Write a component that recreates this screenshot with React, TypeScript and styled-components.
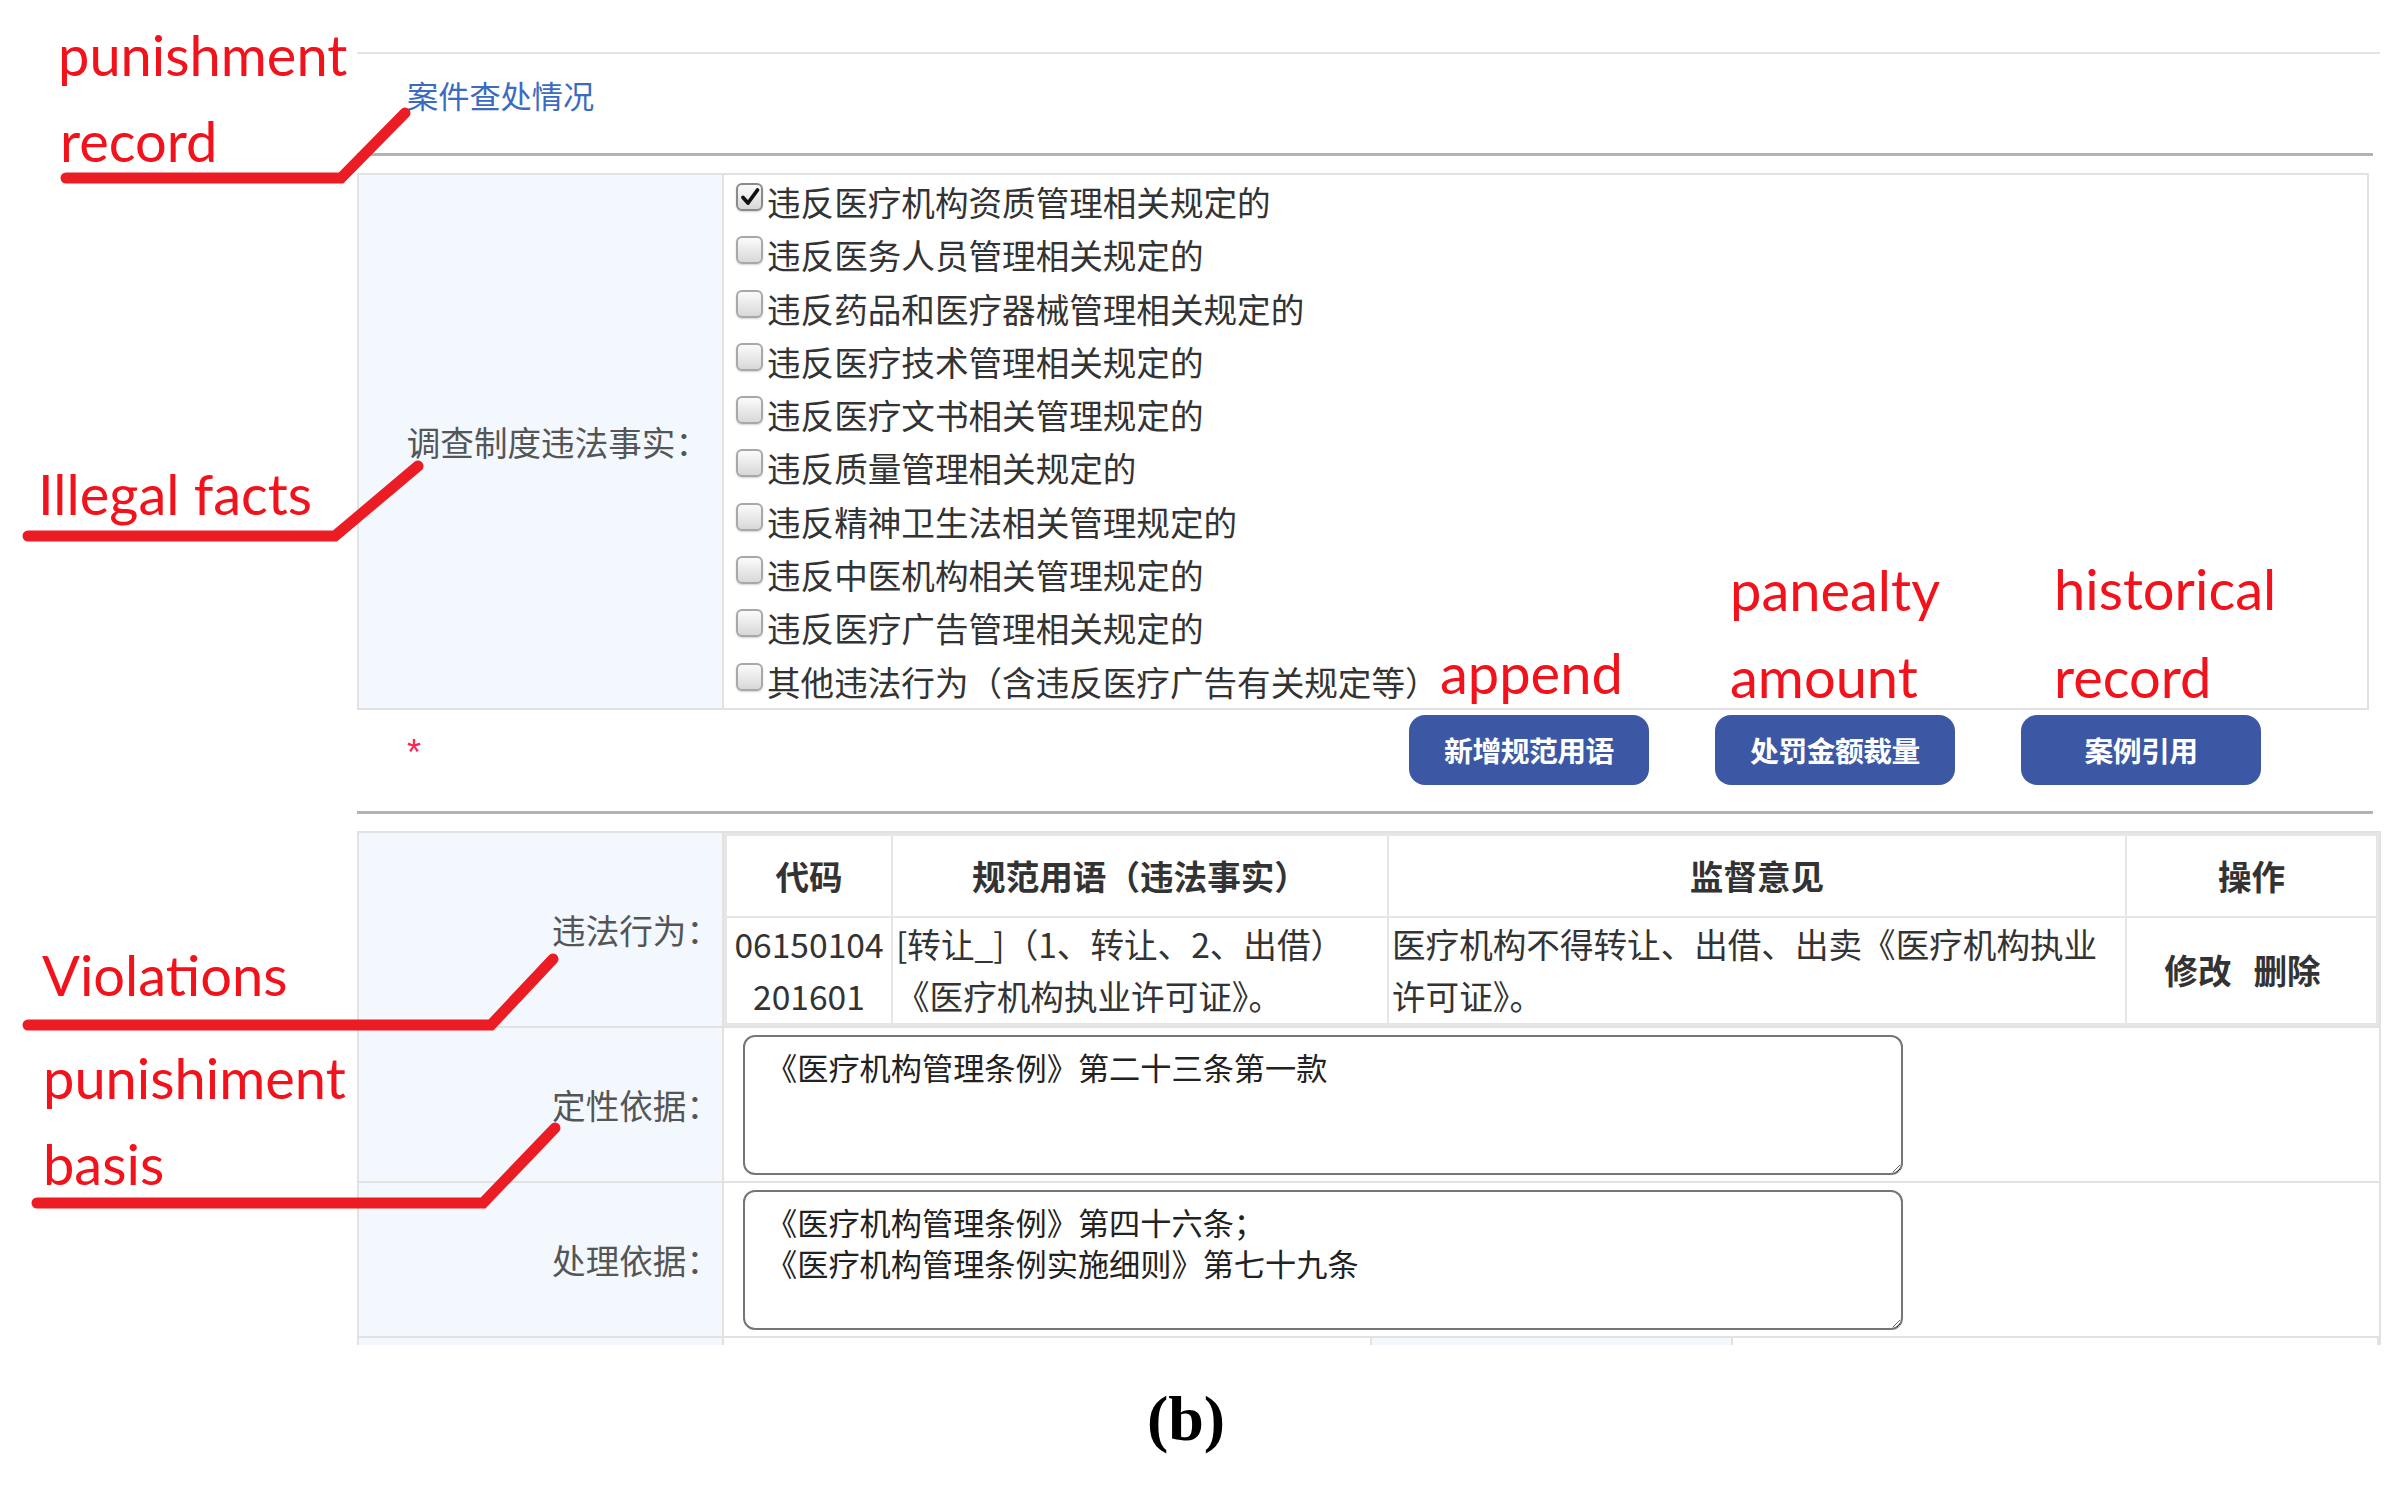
import styled, { createGlobalStyle } from "styled-components"

const GlobalStyle = createGlobalStyle`
  html, body {
    margin: 0;
    padding: 0;
    background: #fff;
  }
  body {
    width: 2408px;
    height: 1486px;
    overflow: hidden;
  }
  * {
    box-sizing: border-box;
  }
`

const cjk = `"Noto Sans CJK SC", "Microsoft YaHei", sans-serif`

const Page = styled.div`
  position: relative;
  width: 2408px;
  height: 1486px;
  background: #fff;
  overflow: hidden;
  font-family: ${cjk};
  color: #333;
`

const Sheet = styled.div`
  margin-left: 357px;
  padding-top: 52px;
  width: 2023px;
`

const Rule = styled.div<{ $tone: "light" | "dark"; $width: number }>`
  width: ${p => p.$width}px;
  border-top: ${p => (p.$tone === "light" ? "2px solid #e3e3e3" : "3px solid #b3b3b3")};
`

const TitleRow = styled.div`
  height: 99px;
  padding: 21px 0 0 50px;
  font-size: 31.2px;
  line-height: 40px;
  color: #3b6bc1;
`

const Panel = styled.div<{ $width: number; $open?: boolean }>`
  margin-top: 17px;
  width: ${p => p.$width}px;
  display: grid;
  grid-template-columns: 365px 1fr;
  border: 2px solid #e2e2e2;
  border-bottom: ${p => (p.$open ? "none" : "2px solid #e2e2e2")};
`

const LabelCell = styled.div<{ $pad: number; $last?: boolean }>`
  display: flex;
  align-items: center;
  justify-content: flex-end;
  padding-right: ${p => p.$pad}px;
  background: #f2f8fd;
  border-right: 2px solid #e2e2e2;
  border-bottom: ${p => (p.$last ? "none" : "2px solid #e2e2e2")};
  font-size: 33.6px;
  color: #555;
  white-space: nowrap;
`

const CheckList = styled.div`
  display: flex;
  flex-direction: column;
  padding-left: 12px;
`

const CheckRow = styled.label`
  display: flex;
  align-items: flex-start;
  gap: 4px;
  height: 53.3px;
  font-size: 33.6px;
  line-height: 53.3px;
  color: #333;
  white-space: nowrap;
`

const CheckBox = styled.span<{ $checked?: boolean }>`
  flex: none;
  width: 27px;
  height: 28px;
  margin-top: 8px;
  display: flex;
  align-items: center;
  justify-content: center;
  border: 2px solid ${p => (p.$checked ? "#8a8a8a" : "#a8a8a8")};
  border-radius: 6px;
  background: linear-gradient(#fbfbfb, #d8d8d8);
  box-shadow: 0 1px 2px rgba(0, 0, 0, 0.18);
`

const ActionRow = styled.div`
  height: 101px;
  display: flex;
  align-items: flex-start;
`

const Star = styled.span`
  margin: 25px 0 0 50px;
  font-family: "Liberation Sans", Arial, sans-serif;
  font-size: 36px;
  line-height: 1;
  color: #ff2255;
`

const ButtonGroup = styled.div`
  margin: 5px 119px 0 auto;
  display: flex;
  gap: 66px;
`

const ActionButton = styled.button`
  width: 240px;
  height: 70px;
  border: none;
  border-radius: 16px;
  background: #3c58a4;
  color: #fff;
  font-family: ${cjk};
  font-size: 28.8px;
  font-weight: 700;
  letter-spacing: -0.5px;
  cursor: pointer;
`

const TableCell = styled.div`
  border-bottom: 2px solid #e2e2e2;
`

const Table = styled.table`
  width: 100%;
  table-layout: fixed;
  border-collapse: separate;
  border-spacing: 0;
  border: 3px solid #e6e6e6;
`

const Th = styled.th<{ $last?: boolean }>`
  height: 82px;
  padding: 0;
  line-height: 80px;
  border-right: ${p => (p.$last ? "none" : "2px solid #e6e6e6")};
  border-bottom: 2px solid #e6e6e6;
  font-size: 33.6px;
  font-weight: 700;
  color: #333;
  text-align: center;
`

const Td = styled.td<{ $align: "left" | "center"; $last?: boolean }>`
  padding: ${p => (p.$align === "left" ? "0 0 0 3px" : p.$last ? "0 18px 0 0" : "0")};
  line-height: 52.5px;
  border-right: ${p => (p.$last ? "none" : "2px solid #e6e6e6")};
  font-size: 33.6px;
  color: #333;
  text-align: ${p => p.$align};
  vertical-align: middle;
  white-space: nowrap;
`

const OpLink = styled.span`
  margin: 0 11px;
  font-weight: 700;
  color: #333;
  cursor: pointer;
`

const BasisCell = styled.div`
  padding: 7px 0 6px 19px;
  border-bottom: 2px solid #e2e2e2;
`

const BasisText = styled.textarea`
  display: block;
  width: 1160px;
  height: 140px;
  padding: 9px 21px;
  border: 2.5px solid #767676;
  border-radius: 12px;
  background: #fff;
  font-family: ${cjk};
  font-size: 31.2px;
  line-height: 41px;
  color: #222;
  outline: none;
`

const StubRow = styled.div`
  grid-column: 1 / -1;
  height: 7px;
  display: grid;
  grid-template-columns: 365px 648px 361px 1fr;
`

const Stub = styled.div<{ $shade?: boolean }>`
  background: ${p => (p.$shade ? "#f2f8fd" : "#fff")};
  border-right: 2px solid #e2e2e2;
`

const Caption = styled.div`
  margin-top: 42px;
  padding-right: 36px;
  text-align: center;
  font-family: "Liberation Serif", "Times New Roman", serif;
  font-size: 64px;
  font-weight: 700;
  line-height: 1;
  color: #000;
`

const Note = styled.span<{ $x: number; $y: number }>`
  position: absolute;
  left: ${p => p.$x}px;
  top: ${p => p.$y}px;
  font-family: Lato, "Open Sans", sans-serif;
  font-size: 56px;
  line-height: 1;
  color: #f2121c;
  white-space: nowrap;
`

const Leaders = styled.svg`
  position: absolute;
  left: 0;
  top: 0;
  pointer-events: none;
`

const facts = [
  "违反医疗机构资质管理相关规定的",
  "违反医务人员管理相关规定的",
  "违反药品和医疗器械管理相关规定的",
  "违反医疗技术管理相关规定的",
  "违反医疗文书相关管理规定的",
  "违反质量管理相关规定的",
  "违反精神卫生法相关管理规定的",
  "违反中医机构相关管理规定的",
  "违反医疗广告管理相关规定的",
  "其他违法行为（含违反医疗广告有关规定等）",
]

// red callouts laid over the screenshot, with their leader lines
const notes = [
  { text: "punishment", x: 58, y: 27 },
  { text: "record", x: 60, y: 113 },
  { text: "Illegal facts", x: 38, y: 466 },
  { text: "Violations", x: 42, y: 947 },
  { text: "punishiment", x: 43, y: 1050 },
  { text: "basis", x: 43, y: 1136 },
  { text: "append", x: 1440, y: 645 },
  { text: "panealty", x: 1730, y: 562 },
  { text: "amount", x: 1730, y: 649 },
  { text: "historical", x: 2054, y: 561 },
  { text: "record", x: 2054, y: 649 },
]

const leaderPaths = [
  "M66 178 L341 178 L405 113",
  "M28 536 L335 536 L418 466",
  "M28 1025 L491 1025 L553 959",
  "M37 1203 L483 1203 L555 1128",
]

function CheckMark() {
  return (
    <svg width="22" height="22" viewBox="0 0 22 22">
      <path d="M4 11.5 L9 17 L18.5 4" fill="none" stroke="#111" strokeWidth="3.8" strokeLinecap="round" strokeLinejoin="round" />
    </svg>
  )
}

export default function App() {
  return (
    <>
      <GlobalStyle />
      <Page>
        <Sheet>
          <Rule $tone="light" $width={2023} />
          <TitleRow>案件查处情况</TitleRow>
          <Rule $tone="dark" $width={2016} />

          <Panel $width={2012}>
            <LabelCell $pad={13} $last>调查制度违法事实：</LabelCell>
            <CheckList>
              {facts.map((fact, i) => (
                <CheckRow key={fact}>
                  <CheckBox $checked={i === 0}>{i === 0 && <CheckMark />}</CheckBox>
                  <span>{fact}</span>
                </CheckRow>
              ))}
            </CheckList>
          </Panel>

          <ActionRow>
            <Star>*</Star>
            <ButtonGroup>
              <ActionButton>新增规范用语</ActionButton>
              <ActionButton>处罚金额裁量</ActionButton>
              <ActionButton>案例引用</ActionButton>
            </ButtonGroup>
          </ActionRow>

          <Rule $tone="dark" $width={2016} />

          <Panel $width={2024} $open>
            <LabelCell $pad={2}>违法行为：</LabelCell>
            <TableCell>
              <Table>
                <colgroup>
                  <col style={{ width: 166 }} />
                  <col style={{ width: 496 }} />
                  <col style={{ width: 738 }} />
                  <col />
                </colgroup>
                <thead>
                  <tr>
                    <Th>代码</Th>
                    <Th>规范用语（违法事实）</Th>
                    <Th>监督意见</Th>
                    <Th $last>操作</Th>
                  </tr>
                </thead>
                <tbody>
                  <tr>
                    <Td $align="center">06150104<br />201601</Td>
                    <Td $align="left">[转让_]（1、转让、2、出借）<br />《医疗机构执业许可证》。</Td>
                    <Td $align="left">医疗机构不得转让、出借、出卖《医疗机构执业<br />许可证》。</Td>
                    <Td $align="center" $last>
                      <OpLink>修改</OpLink>
                      <OpLink>删除</OpLink>
                    </Td>
                  </tr>
                </tbody>
              </Table>
            </TableCell>

            <LabelCell $pad={2}>定性依据：</LabelCell>
            <BasisCell>
              <BasisText readOnly defaultValue="《医疗机构管理条例》第二十三条第一款" />
            </BasisCell>

            <LabelCell $pad={2}>处理依据：</LabelCell>
            <BasisCell>
              <BasisText readOnly defaultValue={"《医疗机构管理条例》第四十六条；\n《医疗机构管理条例实施细则》第七十九条"} />
            </BasisCell>

            <StubRow>
              <Stub $shade />
              <Stub />
              <Stub $shade />
              <Stub />
            </StubRow>
          </Panel>
        </Sheet>

        <Caption>(b)</Caption>

        <Leaders width="2408" height="1486" viewBox="0 0 2408 1486">
          {leaderPaths.map(d => (
            <path key={d} d={d} fill="none" stroke="#ec1c24" strokeWidth="11" strokeLinecap="round" strokeLinejoin="miter" />
          ))}
        </Leaders>
        {notes.map(n => (
          <Note key={n.text + n.y} $x={n.x} $y={n.y}>{n.text}</Note>
        ))}
      </Page>
    </>
  )
}
